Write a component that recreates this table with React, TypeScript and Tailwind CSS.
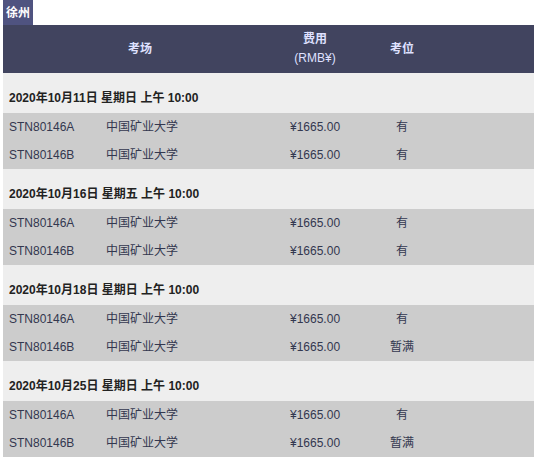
const sessions = [
  { date: "2020年10月11日 星期日 上午 10:00", seats: ["有", "有"] },
  { date: "2020年10月16日 星期五 上午 10:00", seats: ["有", "有"] },
  { date: "2020年10月18日 星期日 上午 10:00", seats: ["有", "暂满"] },
  { date: "2020年10月25日 星期日 上午 10:00", seats: ["有", "暂满"] },
];

const cols = "grid grid-cols-[103px_171px_76px_98px_1fr]";

export default function App() {
  return (
    <div
      className="w-[538px] h-[460px] overflow-hidden bg-white pl-[3px] pr-[4px] text-[12px]"
      style={{ fontFamily: '"Liberation Sans", Arial, "Noto Sans CJK SC", sans-serif' }}
    >
      <div className="flex">
        <div className="bg-[#4f5380] text-white font-bold h-[25px] px-[3px] flex items-center">
          徐州
        </div>
      </div>

      {/* table header */}
      <div className={`${cols} bg-[#41445f] text-[#dfe1ff] h-[48px] items-center`}>
        <div className="col-span-2 text-center font-bold">考场</div>
        <div className="text-center leading-[19px]">
          <div className="font-bold">费用</div>
          <div>(RMB¥)</div>
        </div>
        <div className="text-center font-bold">考位</div>
        <div />
      </div>

      {sessions.map((s) => (
        <div key={s.date}>
          <div className="bg-[#eeeeee] h-[40px] pt-[17px] pl-[6px] leading-[16px] font-bold text-[#222222]">
            {s.date}
          </div>
          <div className="bg-[#cccccc] text-[#33374f]">
            {["STN80146A", "STN80146B"].map((id, i) => (
              <div key={id} className={`${cols} h-[28px] items-center`}>
                <div className="pl-[6px]">{id}</div>
                <div>中国矿业大学</div>
                <div className="pl-[13px]">¥1665.00</div>
                <div className="text-center">{s.seats[i]}</div>
                <div />
              </div>
            ))}
          </div>
        </div>
      ))}
    </div>
  );
}
